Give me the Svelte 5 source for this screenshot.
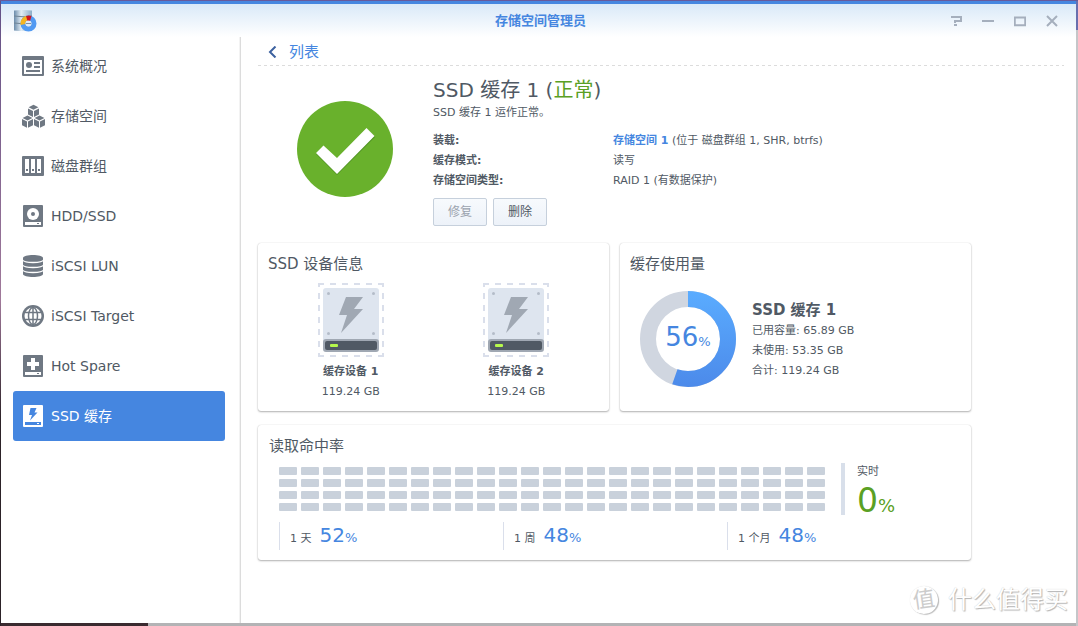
<script>
  const nav = [
    { icon: 'overview', label: '系统概况' },
    { icon: 'volume', label: '存储空间' },
    { icon: 'group', label: '磁盘群组' },
    { icon: 'hdd', label: 'HDD/SSD' },
    { icon: 'lun', label: 'iSCSI LUN' },
    { icon: 'target', label: 'iSCSI Target' },
    { icon: 'spare', label: 'Hot Spare' },
    { icon: 'cache', label: 'SSD 缓存' }
  ];
  let active = $state('cache');

  const devices = [
    { name: '缓存设备 1', size: '119.24 GB' },
    { name: '缓存设备 2', size: '119.24 GB' }
  ];
  const usage = ['已用容量: 65.89 GB', '未使用: 53.35 GB', '合计: 119.24 GB'];
  const rates = [
    { label: '1 天', value: 52 },
    { label: '1 周', value: 48 },
    { label: '1 个月', value: 48 }
  ];
  const cells = Array.from({ length: 100 }, (_, i) => i);
  const ring = 2 * Math.PI * 40;
  const used = 65.89 / 119.24;
</script>

{#snippet cube(x, y)}
  <g transform="translate({x} {y})">
    <path d="M5.5 0 L10.4 2.5 L5.5 5 L0.6 2.5Z" />
    <path d="M0 3.6 L5 6.1 V12.3 L0 9.7Z" />
    <path d="M11 3.6 L6 6.1 V12.3 L11 9.7Z" />
  </g>
{/snippet}

{#snippet navIcon(kind)}
  <svg class="nav-icon" width="24" height="24" viewBox="0 0 24 24" aria-hidden="true">
    {#if kind === 'overview'}
      <rect x="0" y="2" width="22" height="20" rx="1" />
      <rect class="cut" x="2" y="6" width="18" height="14" />
      <circle cx="7" cy="11" r="3" />
      <path d="M12 8h6v2h-6zM12 12h6v2h-6zM4 16h14v2H4z" />
    {:else if kind === 'volume'}
      {@render cube(6, 0.8)}
      {@render cube(0, 11.5)}
      {@render cube(12, 11.5)}
    {:else if kind === 'group'}
      <rect x="0" y="2" width="22" height="20" rx="1" />
      <path class="cut" d="M3 5h4v14H3zM9 5h4v14H9zM15 5h4v14h-4z" />
      <path d="M4 15h2v2H4zM10 15h2v2h-2zM16 15h2v2h-2z" />
    {:else if kind === 'lun'}
      <path d="M1 4v16c0 4 20 4 20 0V4c0-4-20-4-20 0z" />
      <g class="line">
        <path d="M0 5.500c2 4 20 4 22 0M0 10.500c2 4 20 4 22 0M0 15.500c2 4 20 4 22 0" />
      </g>
    {:else if kind === 'target'}
      <circle cx="11" cy="12" r="11" />
      <circle class="cut" cx="11" cy="12" r="8.500" />
      <g class="dark">
        <ellipse cx="11" cy="12" rx="4.500" ry="8.500" />
        <path d="M11 3v18M2.500 8.500h17M2.500 15.500h17" />
      </g>
    {:else}
      <rect x="1" y="1" width="20" height="22" rx="1" />
      <rect class="cut" x="3" y="18" width="16" height="3" />
      <rect x="15" y="19" width="2" height="1" />
      {#if kind === 'hdd'}
        <circle class="cut" cx="11" cy="10" r="6" />
        <circle cx="11" cy="10" r="2" />
      {:else if kind === 'spare'}
        <path class="cut" d="M9 4h4v4h4v4h-4v4H9v-4H5V8h4z" />
      {:else}
        <path class="cut" d="M8.500 4h6l-2 4.500h3L8 16.500l2-5.500H7z" />
      {/if}
    {/if}
  </svg>
{/snippet}

<div class="desktop">
  <div class="window">
    <header>
      <svg class="logo" width="24" height="24" viewBox="0 0 24 24" aria-hidden="true">
        <defs>
          <linearGradient id="tank"><stop offset="0" stop-color="#6b8cab" /><stop offset=".4" stop-color="#e2edf5" /><stop offset="1" stop-color="#8cadc8" /></linearGradient>
        </defs>
        <path d="M1 1.500q9-1 18 0v20q-9 1-18 0z" fill="url(#tank)" />
        <path d="M1 7q9 1.500 18 0M1 14q9 1.500 18 0" stroke="#6f8496" fill="none" />
        <circle cx="15.500" cy="14.500" r="5.500" fill="none" stroke="#519af2" stroke-width="5" />
        <path d="M10 15.500a5.500 5.500 0 0 1 4-6.300" fill="none" stroke="#f5b521" stroke-width="5" />
        <path d="M13 7q2.500-1 5.500 0l-1.500 5h-2.500z" fill="#cf1420" />
        <circle cx="15.500" cy="14.500" r="3" fill="#dceafa" /><path d="M13 14.500h5" stroke="#7891a8" />
      </svg>
      <h1>存储空间管理员</h1>
      <div class="controls">
        <button aria-label="帮助"><svg width="12" height="12" viewBox="0 0 12 12"><path d="M1 2h10v4H5v2M4 10h3" stroke-width="1.500" /></svg></button>
        <button aria-label="最小化"><svg width="12" height="12" viewBox="0 0 12 12"><path d="M0 6h12" /></svg></button>
        <button aria-label="最大化"><svg width="12" height="12" viewBox="0 0 12 12"><path d="M0 2.500h12" stroke-width="3" /><path d="M.75 2v8.300h10.500V2" stroke-width="1.500" /></svg></button>
        <button aria-label="关闭"><svg width="12" height="12" viewBox="0 0 12 12"><path d="M1 1l10 10M11 1L1 11" /></svg></button>
      </div>
    </header>

    <div class="body">
      <nav>
        {#each nav as item}
          <button class="nav-item" class:active={active === item.icon} onclick={() => (active = item.icon)}>
            {@render navIcon(item.icon)}
            <span>{item.label}</span>
          </button>
        {/each}
      </nav>

      <main>
        <div class="crumb">
          <a href="#list">
            <svg width="9" height="12" viewBox="0 0 9 12" aria-hidden="true"><path d="M7.500 .5L2 6l5.500 5.500" /></svg>
            列表
          </a>
        </div>

        <section class="status">
          <svg class="badge" width="96" height="96" viewBox="0 0 96 96" aria-hidden="true">
            <circle cx="48" cy="48" r="48" fill="#69b12c" />
            <path d="M19 53l8-8 13 13 30-30 8 8-38 38z" fill="#4f9220" />
            <path d="M19 52l7.500-7.500L40 57l29.500-30 8 8L40 73z" fill="#fff" />
          </svg>
          <div class="details">
            <h2>SSD 缓存 1 (<em>正常</em>)</h2>
            <p>SSD 缓存 1 运作正常。</p>
            <dl>
              <dt>装载:</dt>
              <dd><a href="#volume">存储空间 1</a> (位于 磁盘群组 1, SHR, btrfs)</dd>
              <dt>缓存模式:</dt>
              <dd>读写</dd>
              <dt>存储空间类型:</dt>
              <dd>RAID 1 (有数据保护)</dd>
            </dl>
            <div class="actions">
              <button disabled>修复</button>
              <button>删除</button>
            </div>
          </div>
        </section>

        <div class="cards">
          <section class="card">
            <h3>SSD 设备信息</h3>
            <div class="devices">
              {#each devices as d}
                <div class="device">
                  <svg width="66" height="74" viewBox="0 0 66 74" aria-hidden="true">
                    <path d="M0 1h66M0 73h66" stroke="#dadfeb" stroke-width="2" stroke-dasharray="6 6" />
                    <path d="M1 0v74M65 0v74" stroke="#dadfeb" stroke-width="2" stroke-dasharray="6 6" stroke-dashoffset="2" />
                    <path d="M0 71v3M66 71v3" stroke="#dadfeb" stroke-width="4" />
                    <rect x="5" y="5" width="56" height="60" rx="3" fill="#dee5ef" />
                    <g fill="#b4bcc8">
                      <circle cx="10.500" cy="10.500" r="1.500" /><circle cx="55.500" cy="10.500" r="1.500" />
                      <circle cx="10.500" cy="50.500" r="1.500" /><circle cx="55.500" cy="50.500" r="1.500" />
                    </g>
                    <path d="M28 14h17l-9 12h9L23 50l6-18h-8z" fill="#a0a8b3" />
                    <rect x="5" y="56" width="56" height="13" rx="3" fill="#a0a8b3" />
                    <rect x="7" y="58" width="52" height="9" rx="2" fill="#505964" />
                    <rect x="12" y="61" width="8" height="3" rx="1" fill="#b6f94c" />
                  </svg>
                  <strong>{d.name}</strong>
                  <span>{d.size}</span>
                </div>
              {/each}
            </div>
          </section>

          <section class="card">
            <h3>缓存使用量</h3>
            <div class="usage">
              <div class="donut">
                <svg width="96" height="96" viewBox="0 0 96 96" aria-hidden="true">
                  <defs>
                    <linearGradient id="fill" gradientUnits="userSpaceOnUse" x1="0" y1="0" x2="96" y2="0"><stop offset="0" stop-color="#4c8aea" /><stop offset="1" stop-color="#5aacff" /></linearGradient>
                  </defs>
                  <circle cx="48" cy="48" r="40" fill="none" stroke="#d0d6e0" stroke-width="16" />
                  <g transform="rotate(-90 48 48)">
                    <circle cx="48" cy="48" r="40" fill="none" stroke="url(#fill)" stroke-width="16" stroke-dasharray="{used * ring} {ring}" />
                  </g>
                </svg>
                <div class="percent">56<small>%</small></div>
              </div>
              <div class="figures">
                <h4>SSD 缓存 1</h4>
                {#each usage as line}<div>{line}</div>{/each}
              </div>
            </div>
          </section>

          <section class="card wide">
            <h3>读取命中率</h3>
            <div class="live">
              <div class="cells">
                {#each cells as c (c)}<i></i>{/each}
              </div>
              <div class="now">
                <span>实时</span>
                <div class="big">0<small>%</small></div>
              </div>
            </div>
            <div class="rates">
              {#each rates as r}
                <div class="rate">{r.label}<b>{r.value}</b><small>%</small></div>
              {/each}
            </div>
          </section>
        </div>

        <div class="mark"><span class="seal">值</span>什么值得买</div>
      </main>
    </div>
  </div>
</div>

<style>
  :global(body) {
    margin: 0;
    font-family: "DejaVu Sans", "Noto Sans CJK SC", sans-serif;
    font-size: 11px;
    color: #505964;
  }
  h1, h2, h3, h4, p, dl, dd { margin: 0; font-weight: normal; }
  button { font: inherit; color: inherit; }
  a { text-decoration: none; color: #4586e0; }

  .desktop {
    box-sizing: border-box;
    min-height: 100vh;
    padding: 1px 2px 3px 1px;
    display: flex;
    background:
      linear-gradient(#67599a, #67599a) top / 100% 1px no-repeat,
      linear-gradient(#625086, #a0799a 300px, #2c2228 420px) left / 1px 100% no-repeat,
      linear-gradient(#3a2b30, #3a2b30) left bottom / 148px 3px no-repeat,
      linear-gradient(#696fae 30px, #c5c6c9 30px) right / 2px 100% no-repeat,
      #b3b3b5;
  }
  .window {
    flex: 1;
    display: flex;
    flex-direction: column;
    border-top: 3px solid #4586e0;
    background: linear-gradient(#d9e9f8, #fff 33px);
    min-width: 0;
  }
  header {
    height: 33px;
    display: grid;
    grid-template-columns: 1fr auto 1fr;
    align-items: center;
    padding: 0 8px 0 12px;
  }
  h1 {
    font-size: 13px;
    line-height: 20px;
    font-weight: bold;
    color: #4586e0;
  }
  .controls { display: flex; justify-content: flex-end; }
  .controls button {
    width: 32px;
    height: 32px;
    padding: 0;
    border: 0;
    background: none;
    display: grid;
    place-items: center;
  }
  .controls path { fill: none; stroke: #a5afbd; stroke-width: 2; }

  .body { flex: 1; display: flex; }
  nav {
    box-sizing: border-box;
    flex: 0 0 240px;
    padding: 4px 15px 0 12px;
    border-right: 1px solid #dcdcdc;
    box-shadow: inset -1px 0 0 #f3f3f3;
  }
  .nav-item {
    width: 100%;
    height: 50px;
    display: flex;
    align-items: center;
    gap: 5px;
    padding: 0 9px;
    border: 0;
    border-radius: 3px;
    background: none;
    font-size: 14px;
    line-height: 20px;
    text-align: left;
  }
  .nav-icon { fill: #6f7883; --cut: #fff; }
  .nav-icon .cut { fill: var(--cut); }
  .nav-icon .line { fill: none; stroke: var(--cut); stroke-width: 1.3; }
  .nav-icon .dark { fill: none; stroke: #6f7883; stroke-width: 1.5; }
  .nav-item.active { background: #4586e0; color: #fff; }
  .active .nav-icon { fill: #fff; --cut: #4586e0; }

  main {
    flex: 1;
    min-width: 0;
    position: relative;
    padding: 0 12px 12px 17px;
  }
  .crumb {
    height: 29px;
    background: repeating-linear-gradient(90deg, #dcdcdc 0 3px, transparent 3px 6px) bottom / 100% 1px no-repeat;
    padding: 0 10px;
  }
  .crumb a {
    display: inline-flex;
    align-items: center;
    gap: 12px;
    font-size: 15px;
    line-height: 30px;
  }
  .crumb path { fill: none; stroke: #3c619f; stroke-width: 2; }

  .status { display: flex; gap: 40px; padding: 11px 0 0 39px; }
  .badge { flex: none; margin-top: 24px; }
  .details { flex: 1; }
  h2 { font-size: 20px; line-height: 26px; }
  em { font-style: normal; color: #5aa024; }
  p { line-height: 20px; }
  dl {
    display: grid;
    grid-template-columns: 180px 1fr;
    line-height: 20px;
    margin: 8px 0 7px;
  }
  dt, dd a { font-weight: bold; }
  .actions { display: flex; gap: 6px; }
  .actions button {
    box-sizing: border-box;
    width: 54px;
    height: 28px;
    padding: 0;
    border: 1px solid #c6d0dc;
    border-radius: 2px;
    background: linear-gradient(#f7fafd, #edf2f9);
    font-size: 12px;
    line-height: 26px;
  }
  .actions button:disabled { color: #9ba3ae; }

  .cards {
    display: grid;
    grid-template-columns: 1fr 1fr;
    gap: 14px 11px;
    max-width: 713px;
    margin-top: 17px;
  }
  .card {
    box-sizing: border-box;
    min-height: 168px;
    padding: 11px 10px 9px;
    border-radius: 3px;
    background: #fff;
    box-shadow: 0 1px 2px rgba(0, 0, 0, 0.3), 0 0 1px rgba(0, 0, 0, 0.2);
  }
  .wide { grid-column: 1 / -1; min-height: 135px; padding: 11px 11px 9px; }
  h3 { font-size: 15px; line-height: 20px; }
  .devices { display: grid; grid-template-columns: 1fr 1fr; padding-top: 9px; }
  .device {
    display: flex;
    flex-direction: column;
    align-items: center;
    line-height: 20px;
  }
  .device svg { margin-bottom: 5px; }

  .usage { display: flex; gap: 16px; padding: 17px 10px 0; }
  .donut { display: grid; height: 96px; }
  .donut svg, .percent { grid-area: 1 / 1; }
  .percent {
    text-align: center;
    font-size: 26px;
    line-height: 92px;
    color: #4586e0;
  }
  .percent small { font-size: 13px; }
  .figures { line-height: 20px; padding-top: 8px; }
  h4 { font-size: 15px; line-height: 22px; font-weight: bold; }

  .live { display: flex; padding: 7px 10px 0; }
  .cells {
    display: grid;
    grid-template-columns: repeat(25, 18px);
    grid-auto-rows: 8px;
    gap: 4px;
    padding: 4px 16px 4px 0;
  }
  .cells i { background: #c9d1db; border-radius: 1px; }
  .now { border-left: 4px solid #d8dfea; padding-left: 12px; line-height: 18px; }
  .big { font-size: 33px; line-height: 36px; padding-top: 2px; height: 32px; color: #5aa024; }
  .big small { font-size: 18px; }
  .rates { display: grid; grid-template-columns: repeat(3, 224px); padding: 7px 10px 0; }
  .rate {
    height: 28px;
    line-height: 26px;
    padding-left: 10px;
    border-left: 1px solid #dadfeb;
  }
  .rate b { margin-left: 8px; font-weight: normal; font-size: 20px; color: #4586e0; }
  .rate small { font-size: 13px; color: #4586e0; }

  .mark {
    position: absolute;
    right: 8px;
    bottom: 8px;
    display: flex;
    align-items: center;
    gap: 10px;
    font-size: 24px;
    line-height: 30px;
    color: #fff;
    text-shadow: 1px 1px 1px #b4b4b4, 0 0 1px #c4c4c4;
  }
  .seal {
    width: 28px;
    height: 28px;
    line-height: 27px;
    border-radius: 50%;
    text-align: center;
    font-size: 22px;
    color: #ccc;
    text-shadow: none;
    transform: rotate(-8deg);
    box-shadow: 1px 1px 1px #bbb, 0 0 1px #ddd;
  }
</style>
